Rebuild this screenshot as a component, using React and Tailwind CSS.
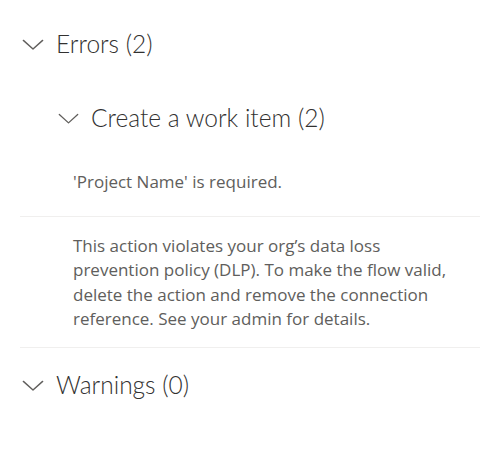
import React from 'react';

const Chevron = ({ className }) => (
    <svg viewBox="0 0 24 12" className={className} fill="none" stroke="currentColor" strokeWidth="1.5" strokeLinecap="round" strokeLinejoin="round">
        <path d="M1.5 1.5 L12 11 L22.5 1.5" />
    </svg>
);

const headingFont = { fontFamily: 'Lato, "Open Sans", sans-serif' };

const App = () => {
    return (
        <div className="w-[480px] h-[457px] bg-white pl-5 overflow-hidden" style={{ fontFamily: '"Open Sans", "Noto Sans", sans-serif' }}>
            {/* Errors */}
            <div className="h-[90px] pt-[32px] flex items-start">
                <div className="flex items-center h-[24px]">
                    <Chevron className="w-[22px] h-[11px] ml-[2px] text-[#605e5c]" />
                    <span className="ml-[12px] text-[24.5px] font-light text-[#323130] leading-none" style={headingFont}>Errors (2)</span>
                </div>
            </div>

            {/* Create a work item */}
            <div className="h-[58px] pl-[38px] flex items-start pt-[16px]">
                <div className="flex items-center h-[24px]">
                    <Chevron className="w-[21px] h-[11px] text-[#605e5c]" />
                    <span className="ml-[12px] text-[24.5px] font-light text-[#323130] leading-none" style={headingFont}>Create a work item (2)</span>
                </div>
            </div>

            <div className="border-b border-[#f0efee]">
                <div className="pl-[53px] pt-[22px] pb-[22px] text-[17px] leading-[24px] text-[#605e5c]">
                    'Project Name' is required.
                </div>
            </div>
            <div className="border-b border-[#f0efee]">
                <div className="pl-[53px] pt-[17px] pb-[15px] pr-[17px] text-[17px] leading-[24.4px] text-[#605e5c]">
                    This action violates your org’s data loss prevention policy (DLP). To make the flow valid, delete the action and remove the connection reference. See your admin for details.
                </div>
            </div>

            {/* Warnings */}
            <div className="pt-[26px] flex items-center h-[24px] box-content">
                <Chevron className="w-[22px] h-[11px] ml-[2px] text-[#605e5c]" />
                <span className="ml-[12px] text-[24.5px] font-light text-[#323130] leading-none" style={headingFont}>Warnings (0)</span>
            </div>
        </div>
    );
};

export default App;
